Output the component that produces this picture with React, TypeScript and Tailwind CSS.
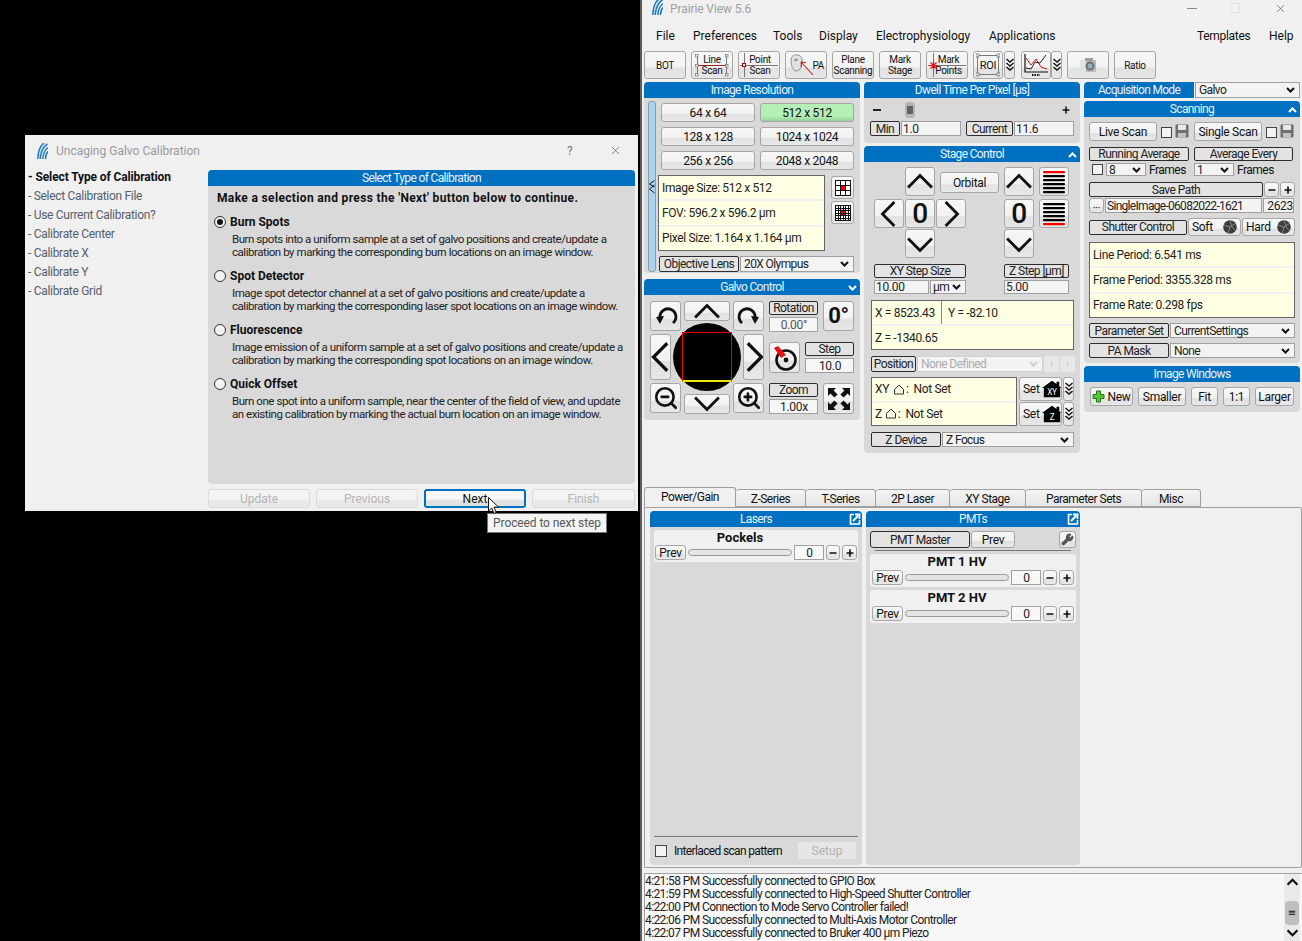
import type { ReactNode } from "react";
import { Minus, Plus, ZoomIn, ZoomOut, Wrench, X } from "lucide-react";

const raised =
  "border border-[#a6a6a6] rounded-[3px] bg-[linear-gradient(#f7f7f7_0%,#f2f2f2_58%,#e1e1e1_62%,#e8e8e8_100%)] text-[#111] tracking-[-0.3px]";

function Btn({ className = "", children }: { className?: string; children?: ReactNode }) {
  return (
    <div className={`${raised} relative flex shrink-0 items-center justify-center overflow-hidden ${className}`}>
      {children}
    </div>
  );
}

function Tag({ className = "", children }: { className?: string; children: ReactNode }) {
  return (
    <div className={`flex shrink-0 items-center justify-center whitespace-nowrap rounded-[2px] border border-[#2d2d2d] bg-[#e3e3e3] leading-none tracking-[-0.55px] text-[#222] ${className}`}>
      {children}
    </div>
  );
}

function Field({ className = "", children }: { className?: string; children?: ReactNode }) {
  return (
    <div className={`flex shrink-0 items-center whitespace-nowrap border border-[#a0a0a0] bg-[#f3f3f3] pl-px leading-none tracking-[-0.3px] text-[#222] ${className}`}>
      {children}
    </div>
  );
}

function Caret({ color = "#111" }: { color?: string }) {
  return (
    <svg width="9" height="6" viewBox="0 0 9 6" className="shrink-0">
      <polyline points="1,1 4.5,4.5 8,1" fill="none" stroke={color} strokeWidth="2" />
    </svg>
  );
}

function Select({ className = "", children, muted = false }: { className?: string; children?: ReactNode; muted?: boolean }) {
  return (
    <div className={`flex shrink-0 items-center justify-between whitespace-nowrap border border-[#a0a0a0] bg-[#f3f3f3] pl-[3px] pr-[4px] leading-none tracking-[-0.6px] text-[#222] ${className}`}>
      <span className={muted ? "text-[#adadad]" : ""}>{children}</span>
      <Caret color={muted ? "#cfcfcf" : "#111"} />
    </div>
  );
}

function Panel({
  title,
  toggle,
  popout,
  className = "",
  bodyClass = "",
  children,
}: {
  title: string;
  toggle?: "up" | "down";
  popout?: boolean;
  className?: string;
  bodyClass?: string;
  children: ReactNode;
}) {
  return (
    <div className={`flex flex-col ${className}`}>
      <div className="relative h-[16px] shrink-0 rounded-t-[4px] bg-[#0070c0] text-center text-[12px] leading-[16px] tracking-[-0.65px] text-[#e8f2fa]">
        {title}
        {toggle ? (
          <svg width="9" height="6" viewBox="0 0 9 6" className={`absolute right-[3px] top-[6px] ${toggle === "down" ? "rotate-180" : ""}`}>
            <polyline points="1,5 4.5,1.5 8,5" fill="none" stroke="#fff" strokeWidth="2" />
          </svg>
        ) : null}
        {popout ? (
          <svg width="12" height="12" viewBox="0 0 12 12" className="absolute right-[1px] top-[2px]">
            <path d="M5 1.5H1.5v9.5h9V7" fill="none" stroke="#fff" strokeWidth="1.6" />
            <path d="M4 8 L9 3 M6 1.5h4.5V6" fill="none" stroke="#fff" strokeWidth="1.8" />
          </svg>
        ) : null}
      </div>
      <div className={`min-h-0 flex-1 rounded-b-[4px] bg-[#d9d9d9] ${bodyClass}`}>{children}</div>
    </div>
  );
}

function InfoBox({ className = "", rows }: { className?: string; rows: ReactNode[] }) {
  return (
    <div className={`flex shrink-0 flex-col gap-[2px] border border-[#666] bg-[#f0f0f0] text-[12px] tracking-[-0.35px] text-[#222] ${className}`}>
      {rows.map((row, i) => (
        <div key={i} className="flex min-h-0 flex-1 items-center bg-[#ffffe3] px-[3px]">
          {row}
        </div>
      ))}
    </div>
  );
}

function Chevron({ dir, className = "", w = 24, sw = 2.6 }: { dir: "up" | "down" | "left" | "right"; className?: string; w?: number; sw?: number }) {
  const rotate = { up: "", down: "rotate-180", left: "-rotate-90", right: "rotate-90" }[dir];
  return (
    <svg width={w} height={w} viewBox="0 0 24 24" className={`shrink-0 ${rotate} ${className}`}>
      <polyline points="1,17 12,6 23,17" fill="none" stroke="#111" strokeWidth={sw} />
    </svg>
  );
}

function Triple() {
  return (
    <svg width="8" height="14" viewBox="0 0 8 14" className="shrink-0">
      {[1, 5, 9].map((y) => (
        <polyline key={y} points={`0.5,${y} 4,${y + 3} 7.5,${y}`} fill="none" stroke="#111" strokeWidth="1.4" />
      ))}
    </svg>
  );
}

function Stack({ redFirst }: { redFirst: boolean }) {
  const ys = [2, 6, 10, 14, 18, 22];
  return (
    <svg width="22" height="24" viewBox="0 0 22 24">
      {ys.map((y, i) => (
        <rect key={y} x="0" y={y - 1} width="22" height="2.2" rx="1" fill={(redFirst ? i === 0 : i === 5) ? "#f00000" : "#000"} />
      ))}
    </svg>
  );
}

function GridIcon({ n }: { n: number }) {
  const cell = 15 / n;
  const lines = Array.from({ length: n + 1 }, (_, i) => 0.5 + i * cell);
  const from = n === 3 ? 1 : 2;
  const span = n === 3 ? 1 : 2;
  return (
    <svg width="16" height="16" viewBox="0 0 16 16" shapeRendering="crispEdges">
      <rect x="0.5" y="0.5" width="15" height="15" fill="#fff" />
      <rect x={0.5 + from * cell} y={0.5 + from * cell} width={span * cell} height={span * cell} fill="#f00000" />
      {lines.map((p) => (
        <g key={p}>
          <line x1={p} y1="0" x2={p} y2="16" stroke="#111" strokeWidth="1" />
          <line x1="0" y1={p} x2="16" y2={p} stroke="#111" strokeWidth="1" />
        </g>
      ))}
    </svg>
  );
}

function RotateIcon({ flip }: { flip?: boolean }) {
  return (
    <svg width="24" height="24" viewBox="0 0 24 24" className={flip ? "-scale-x-100" : ""}>
      <path d="M6 14 A8 8 0 1 1 19 19" fill="none" stroke="#111" strokeWidth="2.8" />
      <path d="M2 13 L10 12 L6 20 Z" fill="#111" />
    </svg>
  );
}

function FloppyIcon() {
  return (
    <svg width="14" height="14" viewBox="0 0 14 14">
      <rect x="0.5" y="0.5" width="13" height="13" rx="1" fill="#6f6f6f" />
      <rect x="3" y="1" width="8" height="5" fill="#e8e8e8" />
      <rect x="3" y="9" width="8" height="4.5" fill="#c4c4c4" />
    </svg>
  );
}

function Check({ className = "" }: { className?: string }) {
  return <div className={`h-[11px] w-[11px] shrink-0 border border-[#444] bg-[#f3f3f3] ${className}`} />;
}

function Shutter() {
  return (
    <svg width="14" height="14" viewBox="0 0 14 14" className="shrink-0">
      <circle cx="7" cy="7" r="6.8" fill="#3c3c3c" />
      <path d="M7 .5 L9 7 L13 11 M.8 5 L7 7 L5 13.4 M13 3 L7 7" fill="none" stroke="#9a9a9a" strokeWidth="0.8" />
    </svg>
  );
}

function House({ label }: { label: string }) {
  return (
    <svg width="20" height="18" viewBox="0 0 22 18" className="shrink-0">
      <path d="M0 8 L11 0 L16 3.6 V1 H19 V6 L22 8 H20 V18 H2 V8 Z" fill="#000" />
      <text x="11" y="16" textAnchor="middle" fontSize="9" fontFamily="Roboto" fill="#fff">
        {label}
      </text>
    </svg>
  );
}

function HomeRow({ axis, gap }: { axis: string; gap: string }) {
  return (
    <div className="flex items-center">
      <span>{axis}</span>
      <svg width="12" height="11" viewBox="0 0 12 11" className={`shrink-0 ${gap}`}>
        <path d="M1.5 5.5 L6 1 L10.5 5.5 V10 H1.5 Z" fill="none" stroke="#333" strokeWidth="1" />
      </svg>
      <span className="ml-px mr-[5px]">:</span>
      <span>Not Set</span>
    </div>
  );
}

function BrukerMark({ className = "" }: { className?: string }) {
  return (
    <svg width="11" height="16" viewBox="0 0 11 16" className={className}>
      <path d="M0.8 16 C1 9 3 3 7 0 M3.2 16 C3.5 10 6 4 10.5 0.8 M5.8 16 C6 11 8 7 11 4.5 M8.5 16 C8.5 13 9.5 10 11 8.5" fill="none" stroke="#2279b8" strokeWidth="1.5" />
      <path d="M2 16 C2.5 10 5 4 8.5 0.5" fill="none" stroke="#7fbde3" strokeWidth="0.8" />
    </svg>
  );
}

function ValueRow() {
  return (
    <div className="flex items-center gap-[2px] text-[12px]">
      <Btn className="h-[15px] w-[31px]">Prev</Btn>
      <div className="h-[7px] w-[104px] shrink-0 rounded-full border border-[#9a9a9a] bg-[#e4e4e4]" />
      <Field className="h-[15px] w-[30px] justify-center bg-[#f8f8f8]">0</Field>
      <Btn className="h-[15px] w-[14px]">
        <Minus size={10} strokeWidth={4} />
      </Btn>
      <Btn className="h-[15px] w-[15px]">
        <Plus size={10} strokeWidth={4} />
      </Btn>
    </div>
  );
}

function HvCard({ title, className = "" }: { title: string; className?: string }) {
  return (
    <div className={`flex h-[33px] flex-col items-center rounded-[3px] bg-[#f0f0f0] ${className}`}>
      <div className="h-[16px] pr-[32px] text-[13px] font-bold leading-[15px] text-[#111]">{title}</div>
      <ValueRow />
    </div>
  );
}

const menuLeft = [
  { label: "File", w: "w-[37px]" },
  { label: "Preferences", w: "w-[80px]" },
  { label: "Tools", w: "w-[46px]" },
  { label: "Display", w: "w-[57px]" },
  { label: "Electrophysiology", w: "w-[113px]" },
  { label: "Applications", w: "w-[90px]" },
];

const tabs = [
  { label: "Z-Series", w: "w-[70px]" },
  { label: "T-Series", w: "w-[70px]" },
  { label: "2P Laser", w: "w-[74px]" },
  { label: "XY Stage", w: "w-[76px]" },
  { label: "Parameter Sets", w: "w-[116px]" },
  { label: "Misc", w: "w-[59px]" },
];

const logLines = [
  "4:21:58 PM Successfully connected to GPIO Box",
  "4:21:59 PM Successfully connected to High-Speed Shutter Controller",
  "4:22:00 PM Connection to Mode Servo Controller failed!",
  "4:22:06 PM Successfully connected to Multi-Axis Motor Controller",
  "4:22:07 PM Successfully connected to Bruker 400 µm Piezo",
];

const calibrations = [
  {
    title: "Burn Spots",
    checked: true,
    lines: [
      "Burn spots into a uniform sample at a set of galvo positions and create/update a",
      "calibration by marking the corresponding burn locations on an image window.",
    ],
  },
  {
    title: "Spot Detector",
    lines: [
      "Image spot detector channel at a set of galvo positions and create/update a",
      "calibration by marking the corresponding laser spot locations on an image window.",
    ],
  },
  {
    title: "Fluorescence",
    lines: [
      "Image emission of a uniform sample at a set of galvo positions and create/update a",
      "calibration by marking the corresponding spot locations on an image window.",
    ],
  },
  {
    title: "Quick Offset",
    lines: [
      "Burn one spot into a uniform sample, near the center of the field of view, and update",
      "an existing calibration by marking the actual burn location on an image window.",
    ],
  },
];

const steps = [
  "Select Calibration File",
  "Use Current Calibration?",
  "Calibrate Center",
  "Calibrate X",
  "Calibrate Y",
  "Calibrate Grid",
];

function CalibrationDialog() {
  return (
    <div className="absolute left-[25px] top-[135px] flex h-[376px] w-[613px] flex-col bg-[#f0f0f0] text-[12px]">
      <div className="relative flex h-[32px] shrink-0 items-center pl-[12px]">
        <BrukerMark />
        <span className="ml-[8px] text-[12px] text-[#9a9a9a]">Uncaging Galvo Calibration</span>
        <span className="absolute left-[542px] top-[7px] text-[12px] text-[#777]">?</span>
        <X size={13} strokeWidth={1} className="absolute left-[584px] top-[9px] text-[#333]" />
      </div>
      <div className="flex min-h-0 flex-1">
        <div className="w-[183px] shrink-0 pl-[3px] pt-[1px] leading-[19px] tracking-[-0.3px] text-[#555f6b]">
          <div className="h-[19px] font-bold tracking-[-0.12px] text-[#111]">- Select Type of Calibration</div>
          {steps.map((s) => (
            <div key={s} className="h-[19px]">
              - {s}
            </div>
          ))}
        </div>
        <div className="mt-[3px] w-[427px] shrink-0">
          <Panel title="Select Type of Calibration" className="h-[314px]" bodyClass="pl-[6px] pt-[5px]">
            <div className="pl-[3px] text-[12px] font-bold leading-[14px] tracking-[0.35px] text-[#111]">
              Make a selection and press the 'Next' button below to continue.
            </div>
            <div className="mt-[9px]">
              {calibrations.map((c) => (
                <div key={c.title} className="h-[54px] text-[#222]">
                  <div className="flex h-[16px] items-center gap-[4px]">
                    <div className="flex h-[12px] w-[12px] items-center justify-center rounded-full border border-[#333] bg-[#f2f2f2]">
                      {c.checked ? <div className="h-[6px] w-[6px] rounded-full bg-[#111]" /> : null}
                    </div>
                    <span className="font-bold text-[#111]">{c.title}</span>
                  </div>
                  <div className="mt-[3px] pl-[18px] text-[11.5px] leading-[13px] tracking-[-0.45px]">
                    {c.lines.map((l) => (
                      <div key={l} className="whitespace-nowrap">
                        {l}
                      </div>
                    ))}
                  </div>
                </div>
              ))}
            </div>
          </Panel>
          <div className="mt-[5px] flex gap-[6px]">
            {["Update", "Previous"].map((b) => (
              <div key={b} className="flex h-[19px] w-[102px] items-center justify-center rounded-[3px] border border-[#dadada] bg-[linear-gradient(#f3f3f3_55%,#e9e9e9_60%)] text-[#b5b5b5]">
                {b}
              </div>
            ))}
            <div className="flex h-[19px] w-[102px] items-center justify-center rounded-[3px] border-2 border-[#0070c0] bg-[linear-gradient(#f7f7f7_55%,#e1e1e1_60%)] text-[#111]">
              Next
            </div>
            <div className="flex h-[19px] w-[103px] items-center justify-center rounded-[3px] border border-[#dadada] bg-[linear-gradient(#f3f3f3_55%,#e9e9e9_60%)] text-[#b5b5b5]">
              Finish
            </div>
          </div>
        </div>
      </div>
    </div>
  );
}

function Toolbar() {
  return (
    <div className="mt-[4px] flex h-[28px] shrink-0 gap-[5px] text-[10px] leading-[11px]">
      <Btn className="w-[42px]">BOT</Btn>
      <Btn className="w-[42px] flex-col">
        <svg width="40" height="26" viewBox="0 0 40 26" className="absolute left-0 top-0">
          <line x1="4" y1="13.5" x2="36" y2="13.5" stroke="#a52020" strokeWidth="1" />
          <path d="M5.5 4v18M34.5 4v18" stroke="#777" strokeWidth="1" />
          {[[3, 2], [33, 2], [3, 12], [33, 12], [3, 21], [33, 21]].map(([x, y]) => (
            <rect key={`${x}-${y}`} x={x + 0.5} y={y + 0.5} width="2.5" height="2.5" fill="#eee" stroke="#777" strokeWidth="0.7" />
          ))}
        </svg>
        <span className="relative">Line</span>
        <span className="relative">Scan</span>
      </Btn>
      <Btn className="w-[42px] flex-col">
        <svg width="40" height="26" viewBox="0 0 40 26" className="absolute left-0 top-0">
          <line x1="1" y1="13.5" x2="39" y2="13.5" stroke="#777" strokeWidth="1" />
          <line x1="5.5" y1="1" x2="5.5" y2="25" stroke="#777" strokeWidth="1" />
          <rect x="3.5" y="11.5" width="3" height="3" fill="#eee" stroke="#a00" strokeWidth="1" />
        </svg>
        <span className="relative pl-[2px]">Point</span>
        <span className="relative pl-[2px]">Scan</span>
      </Btn>
      <Btn className="w-[42px] !justify-end pr-[2px]">
        <svg width="26" height="24" viewBox="0 0 26 24" className="absolute left-[3px] top-[1px]">
          <path d="M2 6 Q3 1 9 2 Q14 3 13 10 Q12 18 7 18 Q2 17 2 6 Z" fill="#dfe3e4" stroke="#8b9396" strokeWidth="1" />
          <ellipse cx="7" cy="7" rx="2" ry="1.4" fill="#9aa2a5" />
          <path d="M12 9 L24 22 M12 9 l5 0.5 M12 9 l0.5 5" fill="none" stroke="#d81818" strokeWidth="1.1" />
        </svg>
        PA
      </Btn>
      <Btn className="w-[42px] flex-col">
        <span>Plane</span>
        <span>Scanning</span>
      </Btn>
      <Btn className="w-[42px] flex-col">
        <span>Mark</span>
        <span>Stage</span>
      </Btn>
      <Btn className="w-[42px] flex-col">
        <svg width="40" height="26" viewBox="0 0 40 26" className="absolute left-0 top-0">
          <line x1="1" y1="13.5" x2="39" y2="13.5" stroke="#777" strokeWidth="1" />
          <line x1="6.5" y1="1" x2="6.5" y2="25" stroke="#777" strokeWidth="1" />
          <path d="M2.5 13.5 H10.5 M6.5 9.5 V17.5 M3.5 10.5 L9.5 16.5 M9.5 10.5 L3.5 16.5" stroke="#ee1111" strokeWidth="1.2" />
        </svg>
        <span className="relative pl-[3px]">Mark</span>
        <span className="relative pl-[3px]">Points</span>
      </Btn>
      <div className="flex gap-px">
        <Btn className="w-[30px]">
          <svg width="24" height="24" viewBox="0 0 24 24" className="absolute left-[2px] top-[1px]">
            <rect x="1.5" y="2.5" width="21" height="19" fill="none" stroke="#777" strokeWidth="1" />
            {[[0, 1], [21, 1], [0, 20], [21, 20]].map(([x, y]) => (
              <rect key={`${x}-${y}`} x={x} y={y} width="3" height="3" fill="#eee" stroke="#666" strokeWidth="0.7" />
            ))}
          </svg>
          <span className="relative text-[11px]">ROI</span>
        </Btn>
        <Btn className="w-[11px]">
          <Triple />
        </Btn>
      </div>
      <div className="ml-[1px] flex gap-0">
        <Btn className="w-[30px]">
          <svg width="26" height="24" viewBox="0 0 26 24">
            <path d="M2 1 V19 H25" fill="none" stroke="#111" strokeWidth="1.2" />
            <polyline points="3,5 8,12 13,6 18,14 24,16" fill="none" stroke="#c51a1a" strokeWidth="1" />
            <polyline points="3,15 8,16 12,9 17,10 23,2" fill="none" stroke="#222" strokeWidth="1" />
            <path d="M9 22 h8" stroke="#111" strokeWidth="2" strokeDasharray="1.5 1" />
          </svg>
        </Btn>
        <Btn className="w-[11px]">
          <Triple />
        </Btn>
      </div>
      <Btn className="w-[42px]">
        <svg width="18" height="17" viewBox="0 0 18 17">
          <rect x="1" y="3" width="16" height="12" rx="1" fill="#b9b9b9" />
          <rect x="1" y="3" width="6" height="12" fill="#e2e2e2" />
          <rect x="6" y="1" width="8" height="3" fill="#9d9d9d" />
          <circle cx="11" cy="9" r="4.5" fill="#6a7478" />
          <circle cx="11" cy="9" r="2.5" fill="#8fb0c2" />
        </svg>
      </Btn>
      <Btn className="w-[42px]">Ratio</Btn>
    </div>
  );
}

function ImageResolution() {
  const sizes = ["64 x 64", "512 x 512", "128 x 128", "1024 x 1024", "256 x 256", "2048 x 2048"];
  return (
    <Panel title="Image Resolution" className="h-[191px]" bodyClass="flex pl-[4px]">
      <div className="mt-[3px] flex h-[171px] w-[8px] shrink-0 items-center justify-center rounded-[3px] border border-[#8f9ca6] bg-[#a8d4f2]">
        <svg width="6" height="14" viewBox="0 0 6 14" className="shrink-0">
          <path d="M5.5 .5 L.5 4 L5.5 7 M5.5 5 L.5 9 L5.5 13" fill="none" stroke="#111" strokeWidth="1" />
        </svg>
      </div>
      <div className="ml-[2px] w-[196px]">
        <div className="mt-[5px] grid grid-cols-[94px_94px] gap-x-[5px] gap-y-[5px] pl-[3px]">
          {sizes.map((s) => (
            <Btn key={s} className={`h-[19px] ${s === "512 x 512" ? "border-[#8fb08f] !bg-[linear-gradient(#b3efb6_70%,#98d29c)]" : ""}`}>
              {s}
            </Btn>
          ))}
        </div>
        <div className="mt-[5px] flex gap-[6px]">
          <InfoBox
            className="h-[76px] w-[167px]"
            rows={["Image Size: 512 x 512", "FOV: 596.2 x 596.2 µm", "Pixel Size: 1.164 x 1.164 µm"]}
          />
          <div className="flex flex-col gap-[2px] pt-px">
            <Btn className="h-[23px] w-[23px]">
              <GridIcon n={3} />
            </Btn>
            <Btn className="h-[23px] w-[23px]">
              <GridIcon n={6} />
            </Btn>
          </div>
        </div>
        <div className="mt-[5px] flex pl-px">
          <Tag className="h-[16px] w-[80px]">Objective Lens</Tag>
          <Select className="ml-px h-[16px] w-[114px]">20X Olympus</Select>
        </div>
      </div>
    </Panel>
  );
}

function GalvoControl() {
  return (
    <Panel title="Galvo Control" toggle="down" className="mt-[6px] h-[141px]" bodyClass="flex pl-[6px] pt-[6px]">
      <div className="w-[114px] shrink-0">
        <div className="flex h-[33px] items-start justify-between">
          <Btn className="h-[30px] w-[31px]">
            <RotateIcon />
          </Btn>
          <Btn className="h-[20px] w-[46px]">
            <Chevron dir="up" w={26} className="mt-[2px]" />
          </Btn>
          <Btn className="h-[30px] w-[31px]">
            <RotateIcon flip />
          </Btn>
        </div>
        <div className="relative flex h-[49px] items-start justify-between">
          <Btn className="h-[46px] w-[21px]">
            <Chevron dir="left" w={30} />
          </Btn>
          <Btn className="h-[46px] w-[21px]">
            <Chevron dir="right" w={30} />
          </Btn>
          <div className="absolute left-[23px] top-[-11px] flex h-[68px] w-[68px] items-center justify-center rounded-full bg-black">
            <div className="h-[50px] w-[50px] border-x-[1.5px] border-b-[2px] border-t-[1.5px] border-x-[#f00000] border-b-[#e8e800] border-t-[#f00000]" />
          </div>
        </div>
        <div className="flex h-[31px] items-end justify-between">
          <Btn className="h-[30px] w-[31px] self-start">
            <ZoomOut size={26} strokeWidth={2.4} />
          </Btn>
          <Btn className="h-[20px] w-[46px]">
            <Chevron dir="down" w={26} className="mb-[2px]" />
          </Btn>
          <Btn className="h-[30px] w-[31px] self-start">
            <ZoomIn size={26} strokeWidth={2.4} />
          </Btn>
        </div>
      </div>
      <div className="ml-[5px] w-[85px] shrink-0">
        <div className="flex h-[41px] gap-[5px]">
          <div className="w-[49px]">
            <Tag className="h-[14px] w-full">Rotation</Tag>
            <Field className="mt-[2px] h-[15px] w-full justify-center bg-[#f6f6f6] text-[#555]">0.00°</Field>
          </div>
          <Btn className="h-[30px] w-[31px] text-[22px] font-bold">0°</Btn>
        </div>
        <div className="flex h-[41px] gap-[5px]">
          <Btn className="h-[31px] w-[31px]">
            <svg width="26" height="26" viewBox="0 0 26 26">
              <circle cx="14" cy="15" r="9.5" fill="none" stroke="#111" strokeWidth="2.6" />
              <circle cx="14" cy="15" r="2.4" fill="#111" />
              <path d="M2 3 L6 1 L14 10 L9 13 Z" fill="#e81010" />
            </svg>
          </Btn>
          <div className="w-[49px]">
            <Tag className="h-[14px] w-full">Step</Tag>
            <Field className="mt-[2px] h-[15px] w-full justify-center bg-[#f6f6f6]">10.0</Field>
          </div>
        </div>
        <div className="flex gap-[5px]">
          <div className="w-[49px]">
            <Tag className="h-[14px] w-full">Zoom</Tag>
            <Field className="mt-[2px] h-[15px] w-full justify-center bg-[#f6f6f6]">1.00x</Field>
          </div>
          <Btn className="h-[31px] w-[31px]">
            <svg width="22" height="22" viewBox="0 0 22 22">
              <path d="M0 0h8L5.6 2.4 9.6 6.4 6.4 9.6 2.4 5.6 0 8Z" fill="#111" />
              <path d="M22 0v8L19.6 5.6 15.6 9.6 12.4 6.4 16.4 2.4 14 0Z" fill="#111" />
              <path d="M0 22v-8L2.4 16.4 6.4 12.4 9.6 15.6 5.6 19.6 8 22Z" fill="#111" />
              <path d="M22 22h-8L16.4 19.6 12.4 15.6 15.6 12.4 19.6 16.4 22 14Z" fill="#111" />
            </svg>
          </Btn>
        </div>
      </div>
    </Panel>
  );
}

function DwellTime() {
  return (
    <Panel title="Dwell Time Per Pixel [µs]" className="h-[61px]" bodyClass="pt-[4px]">
      <div className="flex h-[16px] items-center px-[9px]">
        <div className="h-[2px] w-[8px] bg-[#222]" />
        <div className="ml-[24px] flex h-[16px] w-[10px] items-center justify-center rounded-[4px] bg-[#b4b4b4]">
          <svg width="6" height="8" viewBox="0 0 6 8">
            <path d="M1 0v8M3 0v8M5 0v8" stroke="#111" strokeWidth="1" />
          </svg>
        </div>
        <Plus size={10} strokeWidth={3.5} className="ml-auto text-[#111]" />
      </div>
      <div className="mt-[3px] flex pl-[6px]">
        <Tag className="h-[15px] w-[30px]">Min</Tag>
        <Field className="ml-px h-[15px] w-[60px]">1.0</Field>
        <Tag className="ml-[5px] h-[15px] w-[47px]">Current</Tag>
        <Field className="ml-px h-[15px] w-[60px]">11.6</Field>
      </div>
    </Panel>
  );
}

function StageControl() {
  const zero = "!overflow-visible h-[29px] w-[30px] text-[28px] font-medium leading-[27px]";
  return (
    <Panel title="Stage Control" toggle="up" className="mt-[3px] h-[307px]" bodyClass="pt-[5px] pl-[7px]">
      <div className="ml-[3px] grid grid-cols-[31px_31px_31px_37px_35px_30px] grid-rows-[32px_30px_29px]">
        <Btn className="col-start-2 row-start-1 h-[29px] w-[30px]">
          <Chevron dir="up" w={26} />
        </Btn>
        <Btn className="col-span-2 col-start-3 row-start-1 ml-[4px] mt-[5px] h-[21px] w-[59px]">Orbital</Btn>
        <Btn className="col-start-5 row-start-1 h-[29px] w-[30px]">
          <Chevron dir="up" w={26} />
        </Btn>
        <Btn className="col-start-6 row-start-1 h-[29px] w-[30px]">
          <Stack redFirst />
        </Btn>
        <Btn className="col-start-1 row-start-2 h-[29px] w-[30px]">
          <Chevron dir="left" w={26} />
        </Btn>
        <Btn className={`col-start-2 row-start-2 ${zero}`}>0</Btn>
        <Btn className="col-start-3 row-start-2 h-[29px] w-[30px]">
          <Chevron dir="right" w={26} />
        </Btn>
        <Btn className={`col-start-5 row-start-2 ${zero}`}>0</Btn>
        <Btn className="col-start-6 row-start-2 h-[29px] w-[30px]">
          <Stack redFirst={false} />
        </Btn>
        <Btn className="col-start-2 row-start-3 h-[29px] w-[30px]">
          <Chevron dir="down" w={26} />
        </Btn>
        <Btn className="col-start-5 row-start-3 h-[29px] w-[30px]">
          <Chevron dir="down" w={26} />
        </Btn>
      </div>
      <div className="ml-[3px] mt-[6px] flex gap-[38px]">
        <div className="w-[92px]">
          <Tag className="h-[14px] w-full">XY Step Size</Tag>
          <div className="mt-[2px] flex">
            <Field className="h-[14px] w-[55px]">10.00</Field>
            <Select className="ml-px h-[14px] w-[36px] !pl-[2px]">µm</Select>
          </div>
        </div>
        <div className="w-[65px]">
          <Tag className="h-[14px] w-full">Z Step [µm]</Tag>
          <Field className="mt-[2px] h-[14px] w-full">5.00</Field>
        </div>
      </div>
      <InfoBox
        className="mt-[6px] h-[50px] w-[203px]"
        rows={[
          <div key="xy" className="flex h-full items-center">
            <span className="w-[66px]">X = 8523.43</span>
            <span className="h-full w-px bg-[#8a8a6a]" />
            <span className="ml-[6px]">Y = -82.10</span>
          </div>,
          "Z = -1340.65",
        ]}
      />
      <div className="mt-[6px] flex h-[16px]">
        <Tag className="h-[16px] w-[45px]">Position</Tag>
        <Select muted className="ml-px h-[16px] w-[126px] border-[#d2d2d2]">
          None Defined
        </Select>
        <div className="ml-px flex gap-px">
          <div className="flex h-[16px] w-[15px] items-center justify-center rounded-[2px] bg-[#e8e8e8] text-[10px] text-[#bbb]">‹</div>
          <div className="flex h-[16px] w-[15px] items-center justify-center rounded-[2px] bg-[#e8e8e8] text-[10px] text-[#bbb]">›</div>
        </div>
      </div>
      <div className="mt-[5px] flex">
        <InfoBox
          className="h-[49px] w-[146px]"
          rows={[<HomeRow key="xy" axis="XY" gap="ml-[4px]" />, <HomeRow key="z" axis="Z" gap="ml-[3px]" />]}
        />
        <div className="ml-[2px] flex flex-col gap-px">
          {["XY", "Z"].map((l) => (
            <div key={l} className="flex gap-px">
              <Btn className="h-[24px] w-[43px] !justify-start gap-[2px] pl-[3px]">
                Set
                <House label={l} />
              </Btn>
              <Btn className="h-[24px] w-[11px]">
                <Triple />
              </Btn>
            </div>
          ))}
        </div>
      </div>
      <div className="mt-[6px] flex">
        <Tag className="h-[15px] w-[70px]">Z Device</Tag>
        <Select className="ml-px h-[15px] w-[132px]">Z Focus</Select>
      </div>
    </Panel>
  );
}

function Scanning() {
  return (
    <Panel title="Scanning" toggle="up" className="mt-[3px] h-[262px]" bodyClass="pl-[5px]">
      <div className="flex h-[24px] items-end">
        <Btn className="h-[19px] w-[68px]">Live Scan</Btn>
        <Check className="mb-[3px] ml-[4px]" />
        <span className="mb-[3px] ml-[3px]">
          <FloppyIcon />
        </span>
        <Btn className="ml-[5px] h-[19px] w-[68px]">Single Scan</Btn>
        <Check className="mb-[3px] ml-[4px]" />
        <span className="mb-[3px] ml-[3px]">
          <FloppyIcon />
        </span>
      </div>
      <div className="mt-[6px] flex gap-[5px]">
        <Tag className="h-[14px] w-[100px]">Running Average</Tag>
        <Tag className="h-[14px] w-[99px]">Average Every</Tag>
      </div>
      <div className="mt-[2px] flex h-[13px] items-center tracking-[-0.5px]">
        <Check className="ml-[3px]" />
        <Select className="ml-[3px] h-[13px] w-[40px] !pl-[2px]">8</Select>
        <span className="ml-[3px] w-[45px]">Frames</span>
        <Select className="h-[13px] w-[40px] !pl-[2px]">1</Select>
        <span className="ml-[3px]">Frames</span>
      </div>
      <div className="mt-[6px] flex gap-px">
        <Tag className="h-[15px] w-[174px]">Save Path</Tag>
        <Btn className="h-[15px] w-[15px]">
          <Minus size={10} strokeWidth={4} />
        </Btn>
        <Btn className="h-[15px] w-[15px]">
          <Plus size={10} strokeWidth={4} />
        </Btn>
      </div>
      <div className="mt-px flex">
        <Btn className="h-[15px] w-[15px] !items-end text-[10px]">...</Btn>
        <Field className="ml-px h-[15px] w-[157px] tracking-[-0.7px]">SingleImage-06082022-1621</Field>
        <Field className="ml-px h-[15px] w-[31px] justify-end pr-0">2623</Field>
      </div>
      <div className="mt-[5px] flex h-[18px] items-center">
        <Tag className="h-[15px] w-[98px]">Shutter Control</Tag>
        <Btn className="ml-px h-[18px] w-[53px] !justify-between px-[3px]">
          Soft
          <Shutter />
        </Btn>
        <Btn className="ml-px h-[18px] w-[53px] !justify-between px-[3px]">
          Hard
          <Shutter />
        </Btn>
      </div>
      <InfoBox
        className="mt-[6px] h-[76px] w-[206px]"
        rows={["Line Period: 6.541 ms", "Frame Period: 3355.328 ms", "Frame Rate: 0.298 fps"]}
      />
      <div className="mt-[5px] flex">
        <Tag className="h-[15px] w-[80px]">Parameter Set</Tag>
        <Select className="ml-px h-[15px] w-[125px]">CurrentSettings</Select>
      </div>
      <div className="mt-[5px] flex">
        <Tag className="h-[15px] w-[80px]">PA Mask</Tag>
        <Select className="ml-px h-[15px] w-[125px]">None</Select>
      </div>
    </Panel>
  );
}

function ImageWindows() {
  return (
    <Panel title="Image Windows" className="mt-[3px] h-[46px]" bodyClass="flex gap-[5px] pl-[6px] pt-[5px]">
      <Btn className="h-[19px] w-[43px] gap-[2px]">
        <svg width="13" height="13" viewBox="0 0 13 13">
          <path d="M4.5 1h4v3.5H12v4H8.5V12h-4V8.5H1v-4h3.5Z" fill="#58c436" stroke="#1d7a14" strokeWidth="1" />
        </svg>
        New
      </Btn>
      <Btn className="h-[19px] w-[48px]">Smaller</Btn>
      <Btn className="h-[19px] w-[27px]">Fit</Btn>
      <Btn className="h-[19px] w-[27px]">1:1</Btn>
      <Btn className="h-[19px] w-[39px]">Larger</Btn>
    </Panel>
  );
}

function TabPage() {
  return (
    <div className="flex h-[361px] shrink-0 gap-[4px] rounded-r-[2px] border border-[#a0a0a0] pl-[5px] pt-[3px]">
      <Panel title="Lasers" popout className="h-[354px] w-[212px]" bodyClass="flex flex-col px-[4px] pt-[3px]">
        <div className="flex h-[32px] flex-col items-center rounded-[3px] bg-[#f0f0f0]">
          <div className="h-[15px] pr-[32px] text-[13px] font-bold leading-[15px] text-[#111]">Pockels</div>
          <ValueRow />
        </div>
        <div className="mt-auto border-t border-[#777] pb-[6px] pt-[5px]">
          <div className="flex h-[17px] items-center">
            <Check className="ml-px h-[12px] w-[12px] bg-[#e9e9e9]" />
            <span className="ml-[7px] w-[108px] shrink-0 whitespace-nowrap tracking-[-0.65px]">Interlaced scan pattern</span>
            <div className="ml-[16px] flex h-[17px] w-[58px] items-center justify-center bg-[#e6e6e6] text-[#b2b2b2]">Setup</div>
          </div>
        </div>
      </Panel>
      <Panel title="PMTs" popout className="h-[354px] w-[214px]" bodyClass="px-[4px] pt-[4px]">
        <div className="flex h-[17px] items-center">
          <Tag className="h-[17px] w-[100px] rounded-[3px]">PMT Master</Tag>
          <Btn className="ml-px h-[17px] w-[44px]">Prev</Btn>
          <Btn className="ml-auto h-[17px] w-[17px]">
            <Wrench size={13} fill="#555" stroke="#555" />
          </Btn>
        </div>
        <div className="mx-[5px] mt-[2px] h-px bg-[#777]" />
        <HvCard title="PMT 1 HV" className="mt-[3px]" />
        <HvCard title="PMT 2 HV" className="mt-[3px]" />
      </Panel>
    </div>
  );
}

function LogView() {
  return (
    <div className="mt-[5px] flex min-h-0 flex-1 border border-b-0 border-r-0 border-[#a0a0a0] bg-[#f7f7f7]">
      <div className="min-w-0 flex-1 pt-px text-[12px] leading-[13px] tracking-[-0.6px] text-[#222]">
        {logLines.map((l) => (
          <div key={l}>{l}</div>
        ))}
      </div>
      <div className="mr-[2px] flex w-[16px] shrink-0 flex-col items-center bg-[#eaeaea] py-[3px]">
        <Chevron dir="up" w={11} sw={5} />
        <div className="mt-[13px] flex h-[24px] w-[14px] items-center justify-center rounded-[4px] bg-[#bfbfbf] text-[10px] leading-none">≡</div>
        <Chevron dir="down" w={11} sw={5} className="mt-auto" />
      </div>
    </div>
  );
}

function MainWindow() {
  return (
    <div className="absolute left-[640px] top-0 flex h-[941px] w-[662px] flex-col border-l-2 border-[#5c5c5c] bg-[#f0f0f0] pl-[2px] text-[12px] leading-[14px] text-[#111]">
      <div className="relative flex h-[24px] shrink-0 items-start">
        <BrukerMark className="ml-[8px] mt-[-1px]" />
        <span className="ml-[7px] mt-[2px] text-[12px] tracking-[-0.1px] text-[#a0a0a0]">Prairie View 5.6</span>
        <div className="absolute left-[543px] top-[8px] h-px w-[10px] bg-[#888]" />
        <div className="absolute left-[586px] top-[3px] h-[10px] w-[10px] border border-[#e2e2e2]" />
        <X size={13} strokeWidth={1} className="absolute left-[630px] top-[2px] text-[#333]" />
      </div>
      <div className="flex h-[23px] shrink-0 items-center pl-[12px]">
        {menuLeft.map((m) => (
          <span key={m.label} className={m.w}>
            {m.label}
          </span>
        ))}
        <span className="ml-[118px] w-[72px] tracking-[-0.3px]">Templates</span>
        <span>Help</span>
      </div>
      <Toolbar />
      <div className="mt-[3px] flex h-[405px] shrink-0 gap-[4px]">
        <div className="w-[216px]">
          <ImageResolution />
          <GalvoControl />
        </div>
        <div className="w-[216px]">
          <DwellTime />
          <StageControl />
        </div>
        <div className="w-[216px]">
          <div className="flex h-[16px]">
            <div className="w-[110px] rounded-tl-[4px] bg-[#0070c0] text-center leading-[16px] tracking-[-0.7px] text-[#e8f2fa]">Acquisition Mode</div>
            <Select className="ml-px h-[16px] w-[105px]">Galvo</Select>
          </div>
          <Scanning />
          <ImageWindows />
        </div>
      </div>
      <div className="flex h-[20px] shrink-0 items-end tracking-[-0.5px]">
        <div className="flex h-[20px] w-[92px] items-start justify-center rounded-t-[3px] border border-b-0 border-[#a0a0a0] bg-[#f0f0f0] pt-[2px]">
          Power/Gain
        </div>
        {tabs.map((t) => (
          <div key={t.label} className={`flex h-[18px] items-center justify-center rounded-t-[3px] border border-l-0 border-[#a0a0a0] bg-[linear-gradient(#f4f4f4,#e6e6e6)] pt-px ${t.w}`}>
            {t.label}
          </div>
        ))}
      </div>
      <TabPage />
      <LogView />
    </div>
  );
}

export default function App() {
  return (
    <div className="relative h-[941px] w-[1302px] overflow-hidden bg-black font-['Roboto','DejaVu_Sans',sans-serif] text-[12px]">
      <CalibrationDialog />
      <MainWindow />
      <div className="absolute left-[487px] top-[513px] flex h-[20px] w-[120px] items-center justify-center border border-[#767676] bg-[#f4f4f4] text-[12px] tracking-[-0.1px] text-[#575757]">
        Proceed to next step
      </div>
      <svg width="12" height="18" viewBox="0 0 12 18" className="absolute left-[488px] top-[497px]">
        <path d="M.5.5 V14 L3.7 11 L6 16.5 L8.2 15.5 L6 10.2 H10.5 Z" fill="#fff" stroke="#111" strokeWidth="1" />
      </svg>
    </div>
  );
}
